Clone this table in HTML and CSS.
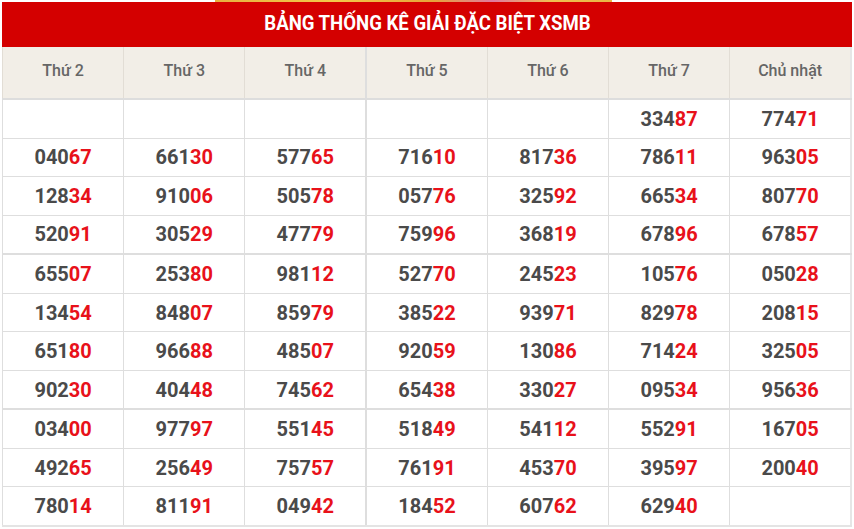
FILE: index.html
```html
<!DOCTYPE html>
<html lang="vi">
<head>
<meta charset="utf-8">
<title>Bảng thống kê giải đặc biệt XSMB</title>
<link rel="stylesheet" href="styles.css">
</head>
<body>
<div class="banner-strip"></div>
<div class="box">
  <div class="title"><span class="title-text">BẢNG THỐNG KÊ GIẢI ĐẶC BIỆT XSMB</span></div>
  <table class="stats">
    <thead>
      <tr>
        <th>Thứ 2</th><th>Thứ 3</th><th class="sep">Thứ 4</th><th>Thứ 5</th><th>Thứ 6</th><th>Thứ 7</th><th>Chủ nhật</th>
      </tr>
    </thead>
    <tbody>
      <tr><td></td><td></td><td class="sep"></td><td></td><td></td><td>334<span class="r">87</span></td><td>774<span class="r">71</span></td></tr>
      <tr><td>040<span class="r">67</span></td><td>661<span class="r">30</span></td><td class="sep">577<span class="r">65</span></td><td>716<span class="r">10</span></td><td>817<span class="r">36</span></td><td>786<span class="r">11</span></td><td>963<span class="r">05</span></td></tr>
      <tr><td>128<span class="r">34</span></td><td>910<span class="r">06</span></td><td class="sep">505<span class="r">78</span></td><td>057<span class="r">76</span></td><td>325<span class="r">92</span></td><td>665<span class="r">34</span></td><td>807<span class="r">70</span></td></tr>
      <tr class="wk"><td>520<span class="r">91</span></td><td>305<span class="r">29</span></td><td class="sep">477<span class="r">79</span></td><td>759<span class="r">96</span></td><td>368<span class="r">19</span></td><td>678<span class="r">96</span></td><td>678<span class="r">57</span></td></tr>
      <tr><td>655<span class="r">07</span></td><td>253<span class="r">80</span></td><td class="sep">981<span class="r">12</span></td><td>527<span class="r">70</span></td><td>245<span class="r">23</span></td><td>105<span class="r">76</span></td><td>050<span class="r">28</span></td></tr>
      <tr><td>134<span class="r">54</span></td><td>848<span class="r">07</span></td><td class="sep">859<span class="r">79</span></td><td>385<span class="r">22</span></td><td>939<span class="r">71</span></td><td>829<span class="r">78</span></td><td>208<span class="r">15</span></td></tr>
      <tr><td>651<span class="r">80</span></td><td>966<span class="r">88</span></td><td class="sep">485<span class="r">07</span></td><td>920<span class="r">59</span></td><td>130<span class="r">86</span></td><td>714<span class="r">24</span></td><td>325<span class="r">05</span></td></tr>
      <tr class="wk"><td>902<span class="r">30</span></td><td>404<span class="r">48</span></td><td class="sep">745<span class="r">62</span></td><td>654<span class="r">38</span></td><td>330<span class="r">27</span></td><td>095<span class="r">34</span></td><td>956<span class="r">36</span></td></tr>
      <tr><td>034<span class="r">00</span></td><td>977<span class="r">97</span></td><td class="sep">551<span class="r">45</span></td><td>518<span class="r">49</span></td><td>541<span class="r">12</span></td><td>552<span class="r">91</span></td><td>167<span class="r">05</span></td></tr>
      <tr><td>492<span class="r">65</span></td><td>256<span class="r">49</span></td><td class="sep">757<span class="r">57</span></td><td>761<span class="r">91</span></td><td>453<span class="r">70</span></td><td>395<span class="r">97</span></td><td>200<span class="r">40</span></td></tr>
      <tr><td>780<span class="r">14</span></td><td>811<span class="r">91</span></td><td class="sep">049<span class="r">42</span></td><td>184<span class="r">52</span></td><td>607<span class="r">62</span></td><td>629<span class="r">40</span></td><td></td></tr>
    </tbody>
  </table>
</div>
</body>
</html>
```

FILE: styles.css
```css
html, body {
  margin: 0;
  padding: 0;
  background: #ffffff;
}

body {
  font-family: Roboto, "Liberation Sans", Arial, sans-serif;
  width: 854px;
  height: 529px;
  overflow: hidden;
}

.banner-strip {
  height: 2px;
  width: 397px;
  margin-left: 215px;
  background: linear-gradient(90deg, #e8b040 0%, #f3c84a 30%, #e7a43a 55%, #e07aa0 70%, #f0c050 85%, #e9b545 100%);
}

.box {
  margin-left: 2px;
  width: 850px;
}

.title {
  height: 45px;
  box-sizing: border-box;
  padding-bottom: 3px;
  background: #d40000;
  color: #ffffff;
  display: flex;
  align-items: center;
  justify-content: center;
}

.title-text {
  display: inline-block;
  font-family: Roboto, "Liberation Sans", sans-serif;
  font-weight: 700;
  font-size: 20px;
  transform: scaleX(0.93);
  letter-spacing: 0;
}

.stats {
  width: 850px;
  border-collapse: collapse;
  table-layout: fixed;
}

.stats th {
  height: 47px;
  padding: 0 0 4px 0;
  background: #f2eee7;
  color: #666666;
  font-weight: 500;
  font-size: 16px;
  text-align: center;
  border-left: 1px solid #e2ddd5;
  border-right: 1px solid #e2ddd5;
  border-bottom: 2px solid #dddddd;
}

.stats td {
  height: 37.55px;
  padding: 0;
  text-align: center;
  border: 1px solid #dedede;
  font-weight: 700;
  font-size: 20px;
  color: #4a4a4a;
}

.stats .sep {
  border-right: 2px solid #dedede;
}

.stats tr.wk td {
  border-bottom: 2px solid #dedede;
}

.stats tbody tr:last-child td {
  border-bottom: 2px solid #e4e4e4;
}

.stats td:last-child,
.stats th:last-child {
  border-right: 2px solid #e6e6e6;
}

.r {
  color: #e8111a;
}
```
